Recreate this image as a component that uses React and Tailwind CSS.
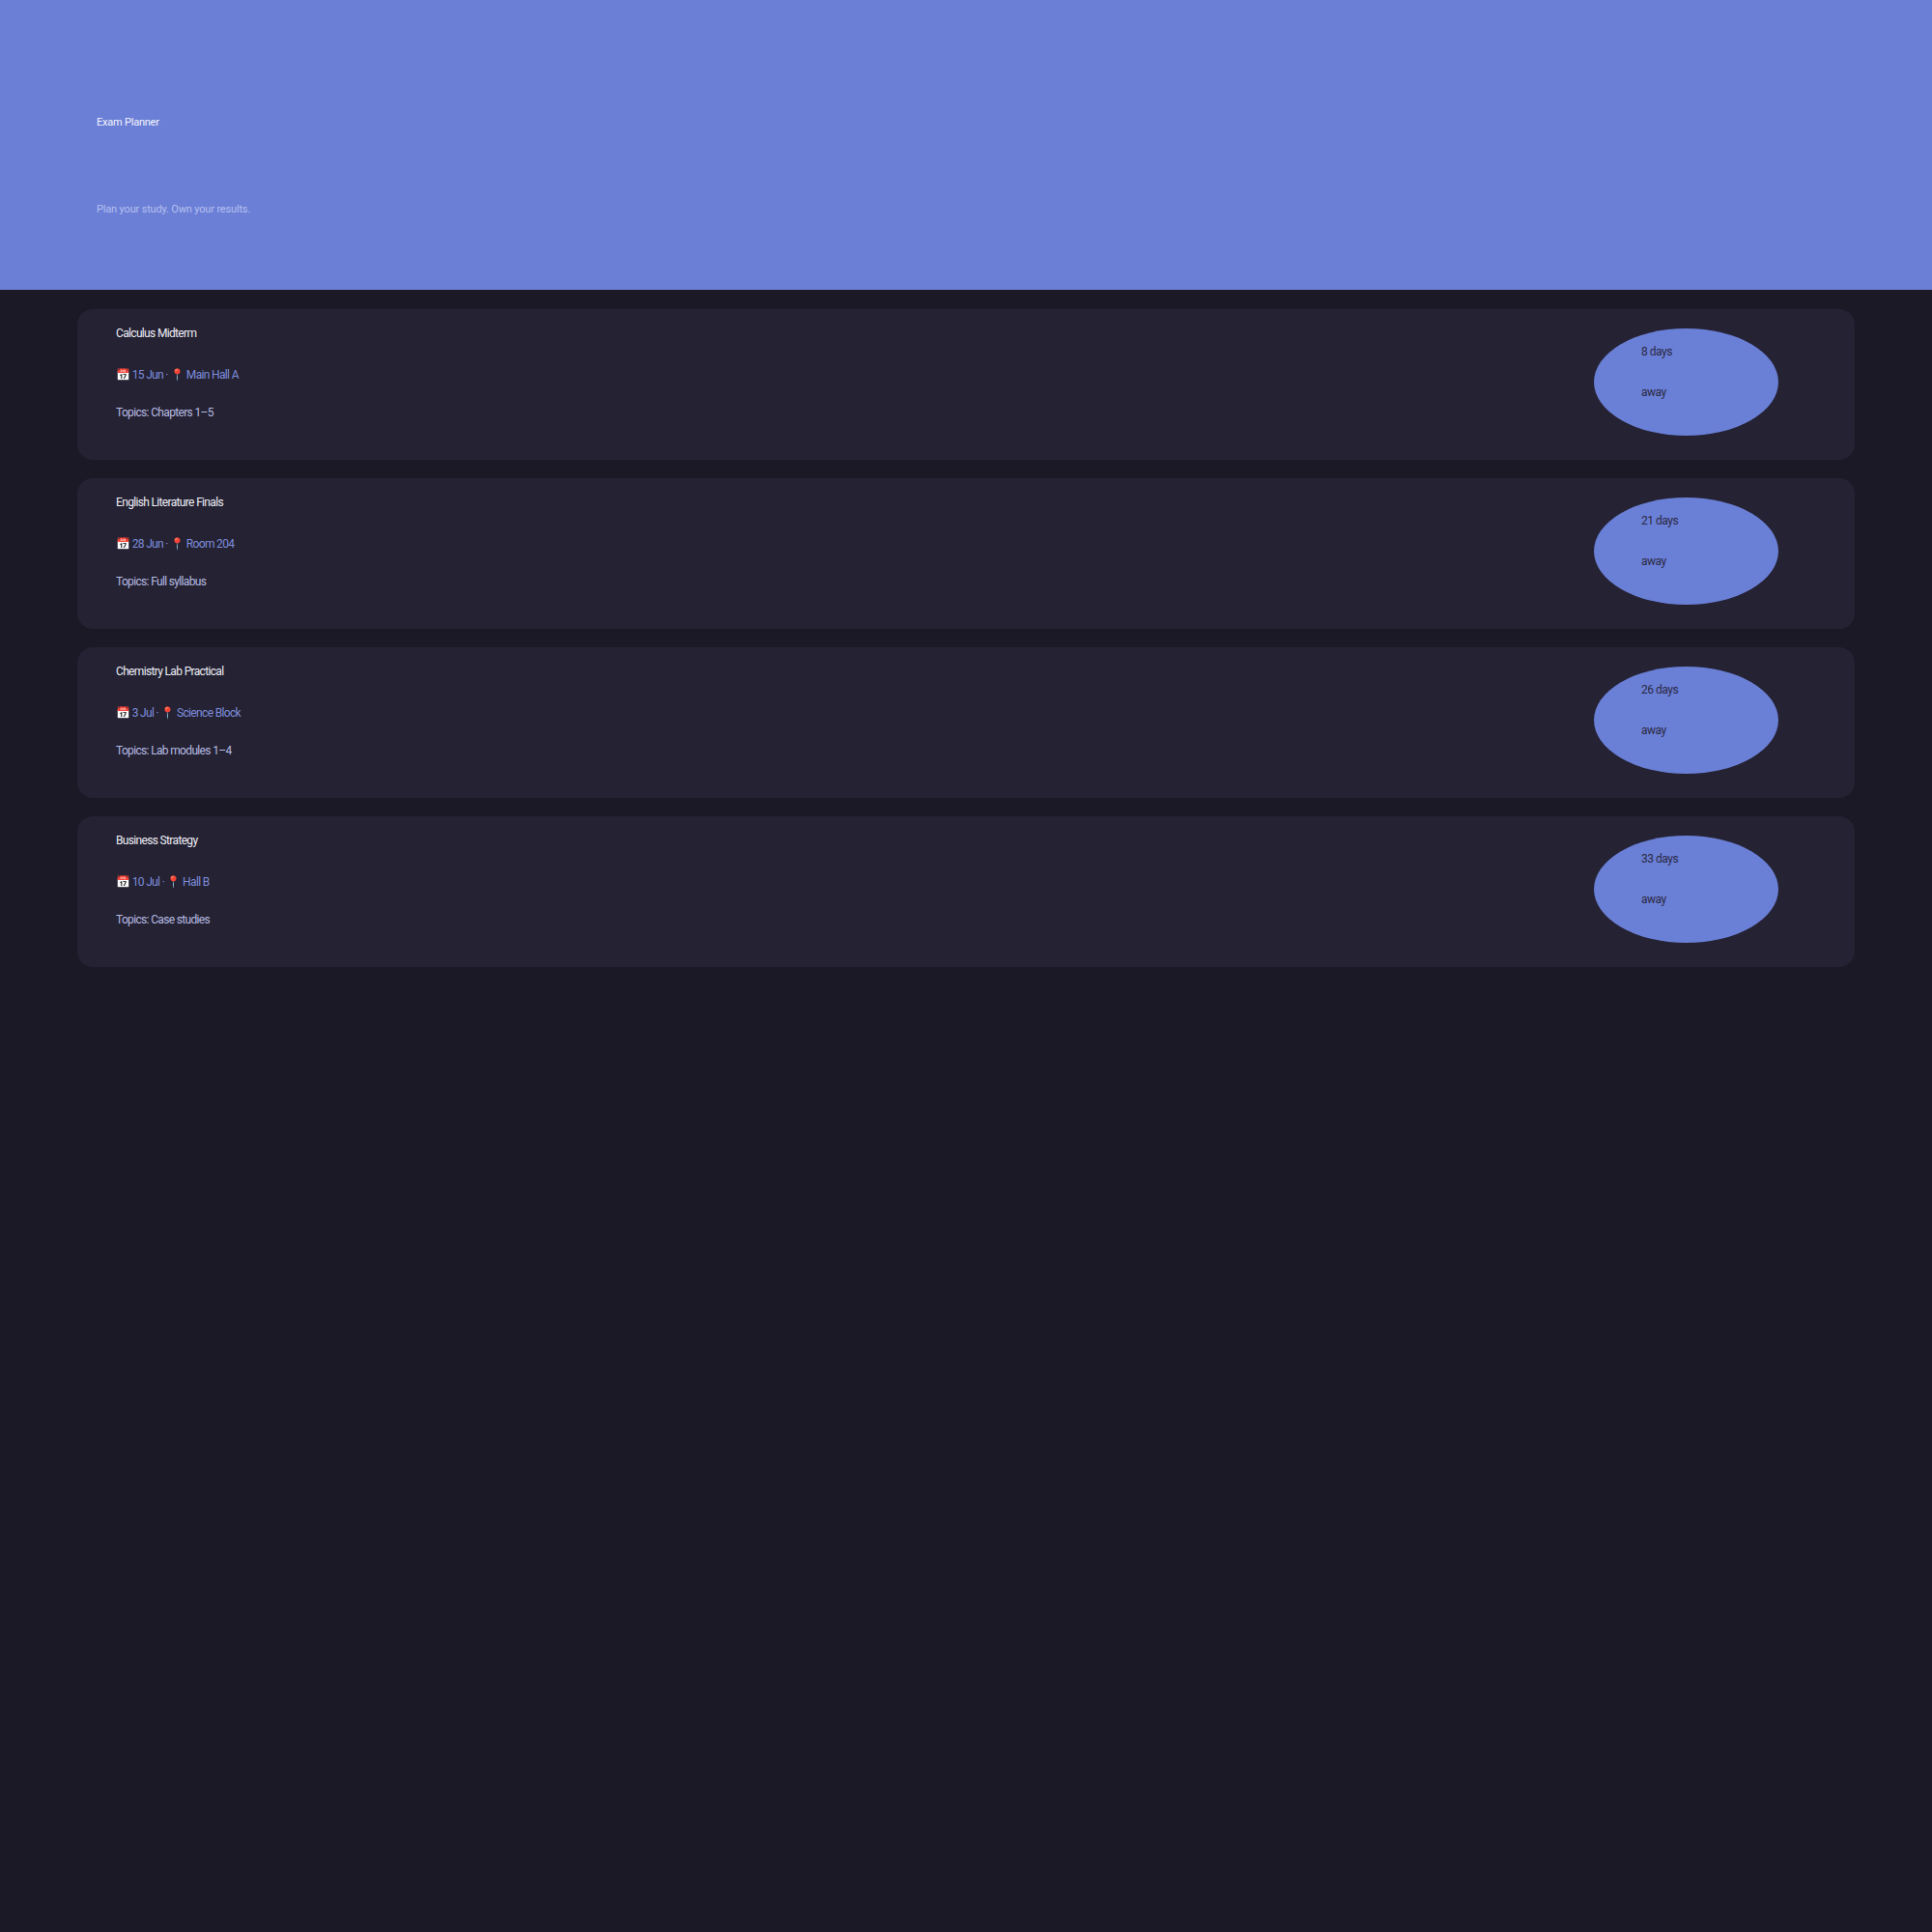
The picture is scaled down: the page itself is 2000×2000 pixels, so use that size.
const exams = [
  { title: "Calculus Midterm", date: "15 Jun", place: "Main Hall A", topics: "Chapters 1–5", days: 8 },
  { title: "English Literature Finals", date: "28 Jun", place: "Room 204", topics: "Full syllabus", days: 21 },
  { title: "Chemistry Lab Practical", date: "3 Jul", place: "Science Block", topics: "Lab modules 1–4", days: 26 },
  { title: "Business Strategy", date: "10 Jul", place: "Hall B", topics: "Case studies", days: 33 },
];

function ExamCard({ exam }) {
  return (
    <div className="flex h-[156px] items-start justify-between rounded-2xl bg-[#242233] pl-[40px] pr-[79px]">
      <div className="flex flex-col pt-[17px] text-[12px] leading-[16px] tracking-[-0.055em]">
        <h3 className="text-[#eeeef6]">{exam.title}</h3>
        <p className="mt-[27px] text-[#7f8ddc]">
          📅 {exam.date} · 📍 {exam.place}
        </p>
        <p className="mt-[23px] text-[#b7bbe2]">Topics: {exam.topics}</p>
      </div>

      <div className="mt-[20px] flex h-[111px] w-[191px] flex-col rounded-[50%] bg-[#6a7fd6] pl-[49px] pt-[16px] text-[12px] leading-[16px] tracking-[-0.04em] text-[#2a2944]">
        <span>{exam.days} days</span>
        <span className="mt-[26px]">away</span>
      </div>
    </div>
  );
}

export default function App() {
  return (
    <div className="min-h-[2000px] bg-[#1b1926] font-['Roboto','Liberation_Sans',sans-serif]">
      <header className="h-[300px] bg-[#6b7fd6] px-[100px] pt-[119px] text-[11px] leading-[16px] tracking-[-0.02em]">
        <h1 className="text-[#f5f6ff]">Exam Planner</h1>
        <p className="mt-[74px] tracking-[-0.015em] text-[#b6c0f0]">Plan your study. Own your results.</p>
      </header>

      <main className="flex flex-col gap-[19px] px-[80px] pt-[20px]">
        {exams.map((exam) => (
          <ExamCard key={exam.title} exam={exam} />
        ))}
      </main>
    </div>
  );
}
